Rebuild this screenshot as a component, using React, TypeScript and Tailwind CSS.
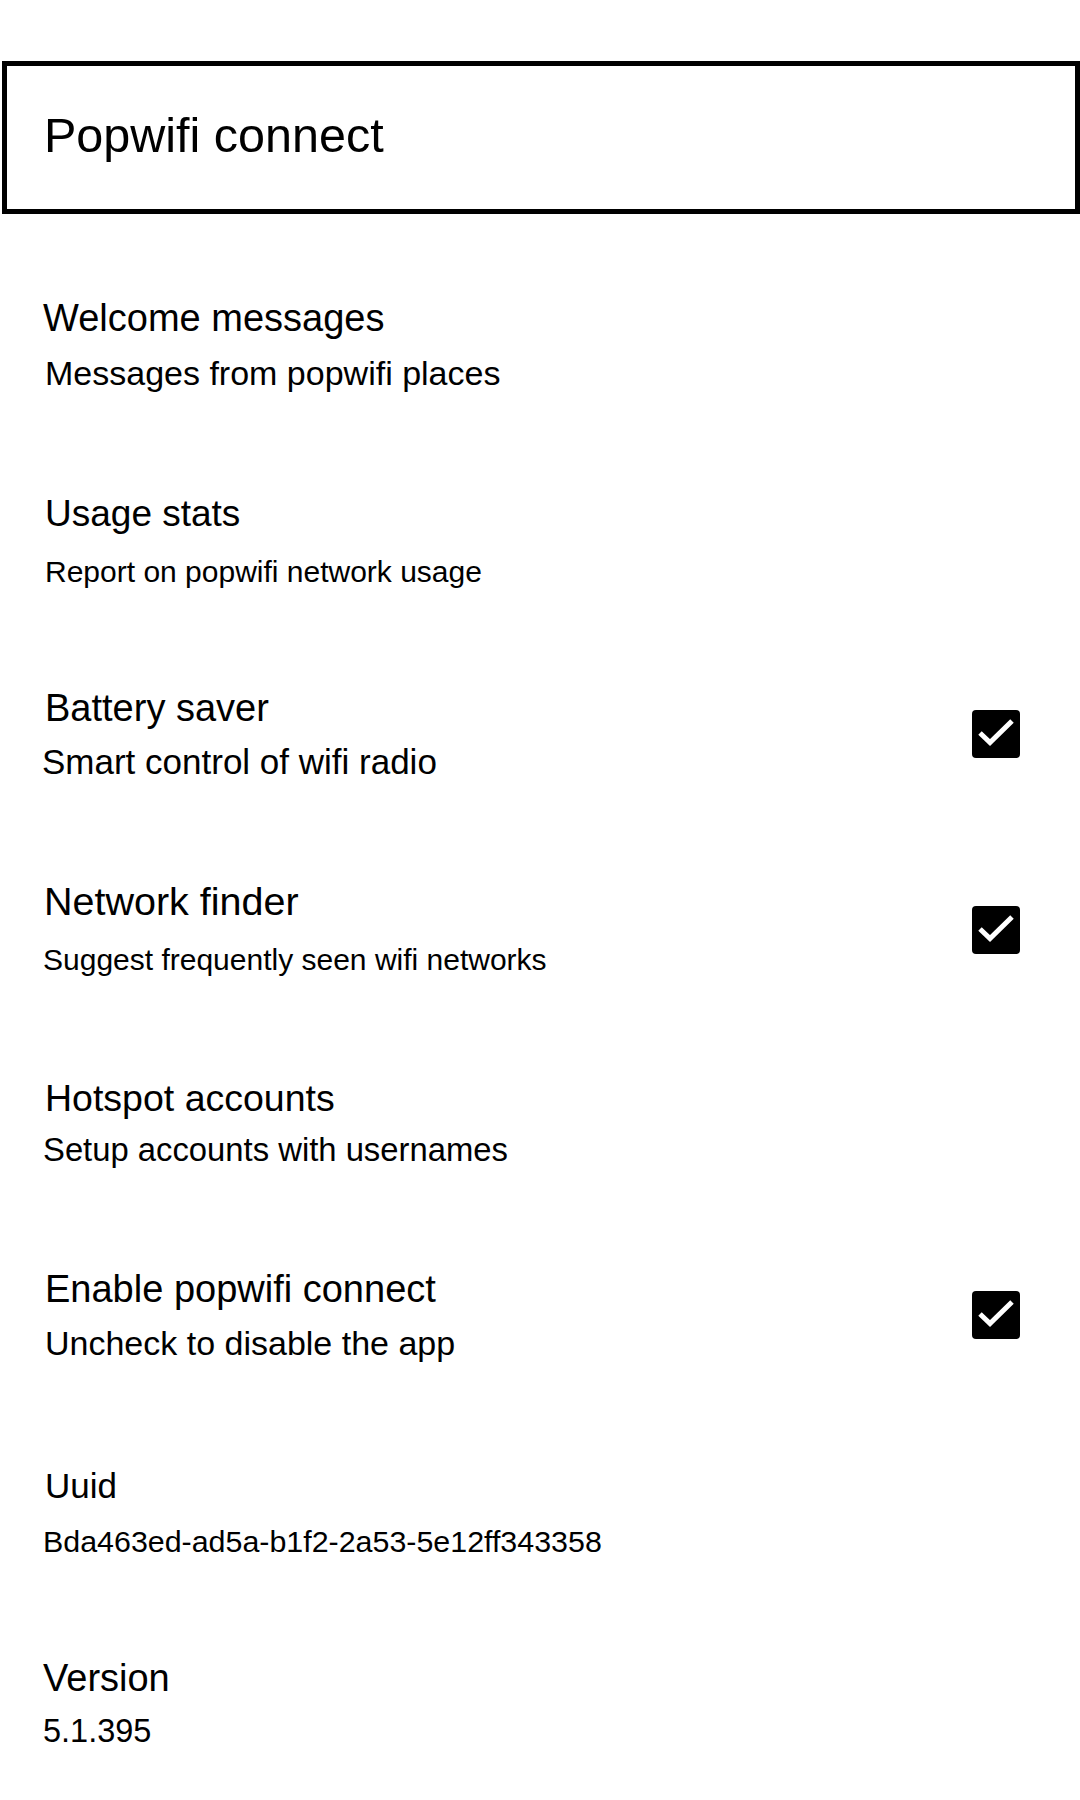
import React from "react";

function Check() {
  return (
    <div className="w-[48px] h-[48px] rounded-[4px] bg-black shrink-0 mr-[60px]">
      <svg width="48" height="48" viewBox="0 0 48 48">
        <path d="M8 23 L18 32.5 L40 11" fill="none" stroke="#fff" strokeWidth="5" strokeLinecap="butt" strokeLinejoin="miter" />
      </svg>
    </div>
  );
}

type Row = {
  title: string;
  sub: string;
  mt: string;
  gap: string;
  tf: string;
  sf: string;
  titleMl?: string;
  subMl?: string;
  check?: boolean;
};

const rows: Row[] = [
  { title: "Welcome messages", sub: "Messages from popwifi places", mt: "mt-[82px]", gap: "mt-[13px]", tf: "text-[38px]", sf: "text-[34px]", titleMl: "-ml-[2px]" },
  { title: "Usage stats", sub: "Report on popwifi network usage", mt: "mt-[99px]", gap: "mt-[16px]", tf: "text-[37px]", sf: "text-[30px]" },
  { title: "Battery saver", sub: "Smart control of wifi radio", mt: "mt-[94px]", gap: "mt-[12px]", tf: "text-[38px]", sf: "text-[35px]", subMl: "-ml-[3px]", check: true },
  { title: "Network finder", sub: "Suggest frequently seen wifi networks", mt: "mt-[97px]", gap: "mt-[17px]", tf: "text-[39.5px]", sf: "text-[30px]", titleMl: "-ml-[1px]", subMl: "-ml-[2px]", check: true },
  { title: "Hotspot accounts", sub: "Setup accounts with usernames", mt: "mt-[96px]", gap: "mt-[10px]", tf: "text-[37.5px]", sf: "text-[32.8px]", subMl: "-ml-[2px]" },
  { title: "Enable popwifi connect", sub: "Uncheck to disable the app", mt: "mt-[97px]", gap: "mt-[12px]", tf: "text-[38px]", sf: "text-[34px]", check: true },
  { title: "Uuid", sub: "Bda463ed-ad5a-b1f2-2a53-5e12ff343358", mt: "mt-[101px]", gap: "mt-[13px]", tf: "text-[35px]", sf: "text-[30.4px]", subMl: "-ml-[2px]" },
  { title: "Version", sub: "5.1.395", mt: "mt-[95px]", gap: "mt-[11px]", tf: "text-[38px]", sf: "text-[32.5px]", titleMl: "-ml-[2px]", subMl: "-ml-[2px]" },
];

export default function App() {
  return (
    <div className="w-[1080px] h-[1800px] bg-white text-black overflow-hidden" style={{ fontFamily: '"Liberation Sans", Arial, sans-serif' }}>
      <div className="pt-[61px]">
        <div className="ml-[2px] w-[1078px] h-[153px] border-[5px] border-black pt-[41px] pl-[37px]">
          <div className="text-[48.5px] leading-[56px]">Popwifi connect</div>
        </div>
      </div>
      {rows.map((r) => (
        <div key={r.title} className={`${r.mt} flex items-center`}>
          <div className="flex-1 pl-[45px]">
            <div className={`${r.tf} leading-[44px] whitespace-nowrap ${r.titleMl ?? ""}`}>{r.title}</div>
            <div className={`${r.gap} ${r.sf} leading-[40px] whitespace-nowrap ${r.subMl ?? ""}`}>{r.sub}</div>
          </div>
          {r.check && <Check />}
        </div>
      ))}
    </div>
  );
}
